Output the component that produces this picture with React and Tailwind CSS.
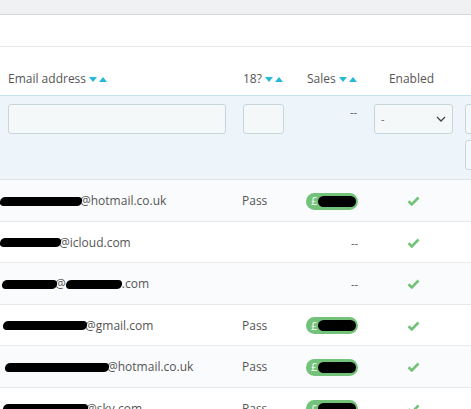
import React from "react";

const SortIcons = () => (
  <span className="inline-flex items-center gap-[2px] ml-[3px]">
    <svg width="8" height="5" viewBox="0 0 8 5"><path d="M0 0h8L4 5z" fill="#25b9d7" /></svg>
    <svg width="8" height="5" viewBox="0 0 8 5"><path d="M0 5h8L4 0z" fill="#25b9d7" /></svg>
  </span>
);

const Check = () => (
  <svg width="13" height="10" viewBox="0 0 13 10">
    <path d="M1.5 5.2l3.3 3.2L11.5 1.5" stroke="#72c279" strokeWidth="2.6" fill="none" strokeLinejoin="miter" />
  </svg>
);

const Blob = ({ w, ml = 0 }) => (
  <span
    className="inline-block h-[9px] bg-black rounded-full align-middle -skew-x-12"
    style={{ width: w, marginLeft: ml }}
  />
);

const rows = [
  { pre: [[82, 0]], text: "@hotmail.co.uk", pass: true, bg: "bg-[#fafbfc]" },
  { pre: [[61, 0]], text: "@icloud.com", pass: false, bg: "bg-white" },
  { pre: [[55, 2]], text: "@", mid: 56, tail: ".com", pass: false, bg: "bg-[#fafbfc]" },
  { pre: [[84, 3]], text: "@gmail.com", pass: true, bg: "bg-white" },
  { pre: [[104, 5]], text: "@hotmail.co.uk", pass: true, bg: "bg-[#fafbfc]" },
  { pre: [[85, 3]], text: "@sky.com", pass: true, bg: "bg-white" },
];

const Input = ({ w }) => (
  <div className="h-[30px] bg-[#f5f8f9] border border-[#c7d6db] rounded-[3px] shrink-0" style={{ width: w }} />
);

export default function App() {
  return (
    <div className="w-[471px] h-[409px] overflow-hidden bg-white text-[12px] text-[#555]" style={{ fontFamily: "'Open Sans', sans-serif" }}>
      <div className="h-[15px] bg-[#eff1f2] border-b border-[#d3d8db]" />
      <div className="h-[32px] border-b border-[#e8eaeb]" />

      {/* Header */}
      <div className="flex h-[48px] items-end pb-[7px] whitespace-nowrap">
        <div className="w-[235px] shrink-0 pl-2 flex items-center">Email address<SortIcons /></div>
        <div className="w-[64px] shrink-0 pl-2 flex items-center">18?<SortIcons /></div>
        <div className="w-[67px] shrink-0 pl-2 flex items-center">Sales<SortIcons /></div>
        <div className="w-[91px] shrink-0 text-center">Enabled</div>
      </div>

      {/* Filters */}
      <div className="flex h-[85px] bg-[#edf5fb] border-t border-[#c6e3ee] border-b border-b-[#dfe3e6] pt-[8px]">
        <div className="w-[235px] shrink-0 pl-2">
          <Input w={218} />
        </div>
        <div className="w-[64px] shrink-0 pl-2">
          <Input w={41} />
        </div>
        <div className="w-[67px] shrink-0 pr-[9px] text-right pt-[1px] text-[11px] leading-[14px]">--</div>
        <div className="w-[91px] shrink-0 pl-2">
          <div className="w-[79px] h-[30px] bg-[#f5f8f9] border border-[#c7d6db] rounded-[3px] flex items-center justify-between px-[6px]">
            <span className="text-[11px] text-[#666]">-</span>
            <svg width="10" height="6" viewBox="0 0 10 6"><path d="M1 1l4 4 4-4" stroke="#444" strokeWidth="1.3" fill="none" /></svg>
          </div>
        </div>
        <div className="shrink-0 pl-2 flex flex-col gap-[6px]">
          <Input w={40} />
          <Input w={40} />
        </div>
      </div>

      {/* Rows */}
      {rows.map((r, i) => (
        <div key={i} className={`flex h-[41.5px] items-center pt-[2px] border-b border-[#e8ebed] whitespace-nowrap ${r.bg}`}>
          <div className="w-[235px] shrink-0 flex items-center">
            {r.pre.map(([w, ml], j) => <Blob key={j} w={w} ml={ml} />)}
            <span className="-ml-[2px]">{r.text}</span>
            {r.mid && <Blob w={r.mid} />}
            {r.tail && <span>{r.tail}</span>}
          </div>
          <div className="w-[64px] shrink-0 pl-[7px]">{r.pass ? "Pass" : ""}</div>
          <div className="w-[67px] shrink-0 pr-2 flex justify-end">
            {r.pass ? (
              <span className="w-[52px] h-[17px] rounded-full bg-[#72c279] flex items-center pl-[5px] text-white text-[11px]">
                £<span className="inline-block w-[38px] h-[11px] bg-black rounded-full ml-[1px]" />
              </span>
            ) : (
              <span className="text-[11px]">--</span>
            )}
          </div>
          <div className="w-[91px] shrink-0 flex justify-center pl-[3px]">
            <Check />
          </div>
        </div>
      ))}
    </div>
  );
}
